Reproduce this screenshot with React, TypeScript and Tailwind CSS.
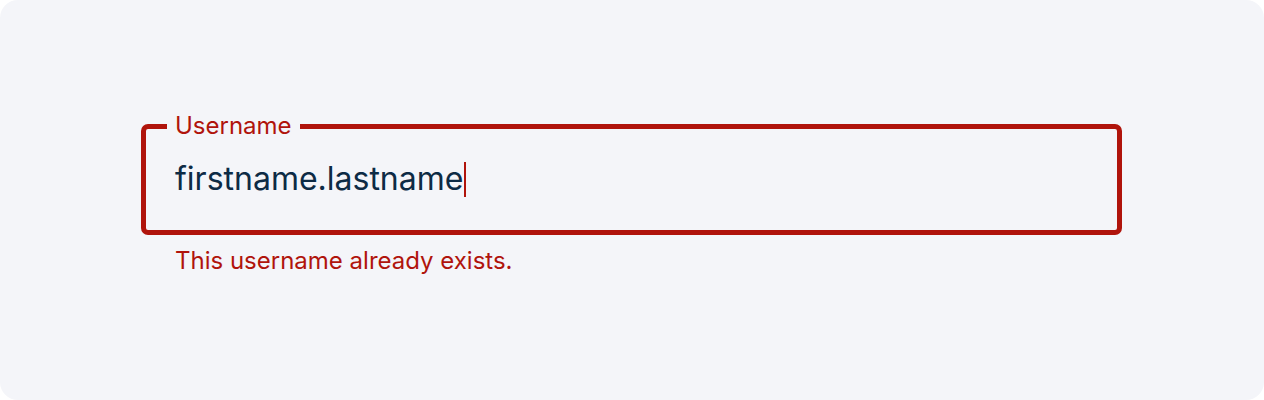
import React from "react";

export default function App() {
  return (
    <div className="w-[1264px] h-[400px] bg-white" style={{ fontFamily: "Inter, 'Noto Sans', sans-serif" }}>
      <div className="w-full h-full rounded-[18px] bg-[#f4f5f9] pt-[110px] pl-[141px]">
        <fieldset className="w-[981px] border-[5px] border-[#b0140c] rounded-[7px] pl-[29px]">
          <legend className="px-2 -ml-2 text-[24px] leading-[32px] text-[#b0140c]">Username</legend>
          <div className="flex items-center h-[88px] pb-[14px]">
            <span className="text-[32px] leading-[40px] text-[#0d2b45]">firstname.lastname</span>
            <span className="w-[2px] h-[35px] bg-[#b0140c] ml-[1px]" />
          </div>
        </fieldset>
        <div className="pl-[34px] pt-[10px] text-[24px] leading-[32px] text-[#b0140c]">This username already exists.</div>
      </div>
    </div>
  );
}
